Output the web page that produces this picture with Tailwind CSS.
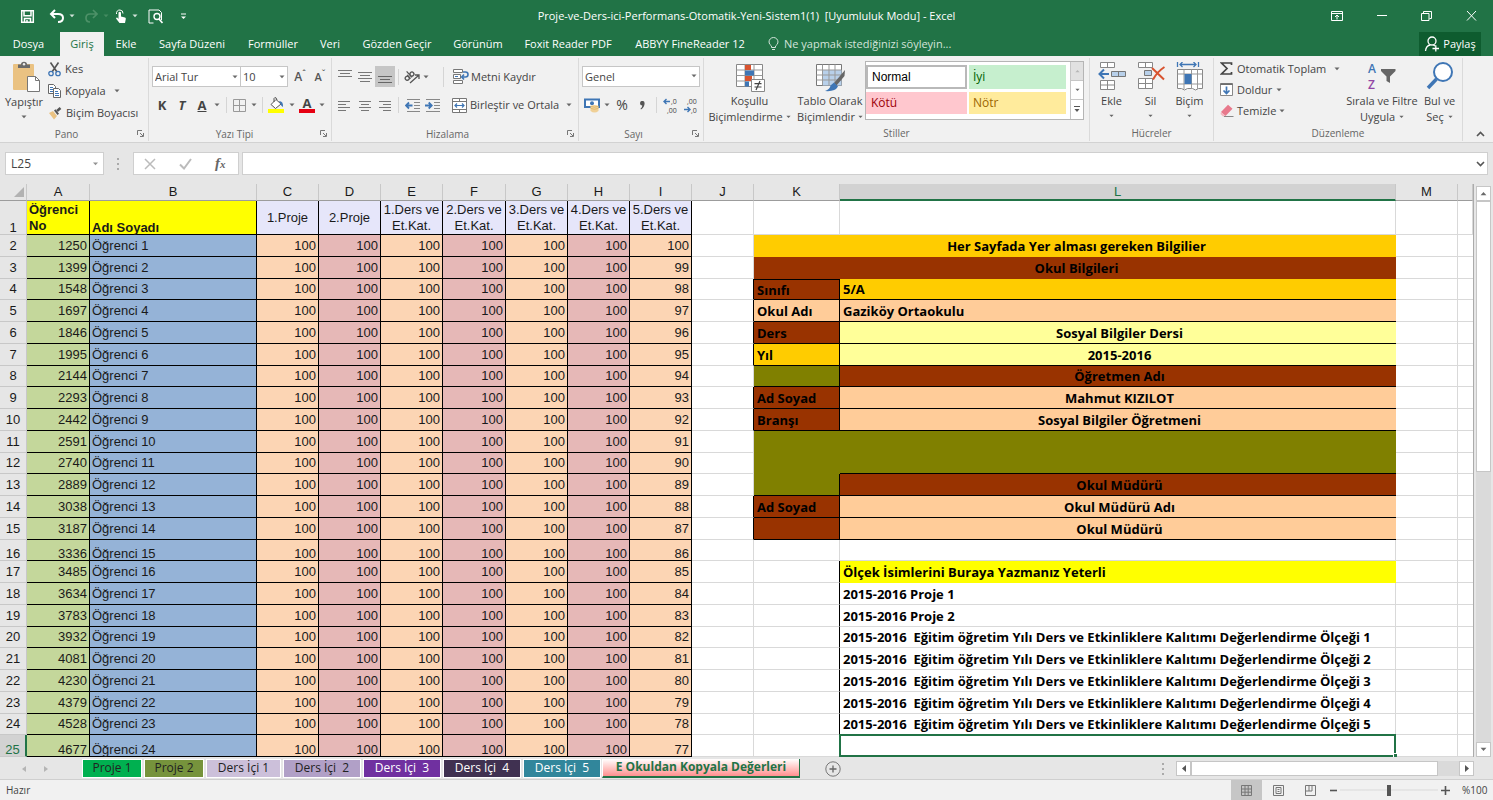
<!DOCTYPE html>
<html lang="tr">
<head>
<meta charset="utf-8">
<title>Proje-ve-Ders-ici-Performans-Otomatik-Yeni-Sistem1(1) - Excel</title>
<script src="https://cdn.jsdelivr.net/npm/@tailwindcss/browser@4"></script>
</head>
<body class="h-screen overflow-hidden flex flex-col bg-[#e6e6e6] font-['Open_Sans','Noto_Sans',sans-serif] text-[11px] leading-4 text-[#444444]">
<svg class="hidden">
  <symbol id="dd" viewBox="0 0 6 4"><path d="M0.5 0.5h5L3 3.2z" fill="currentColor" fill-opacity="0.8"/></symbol>
  <symbol id="launch" viewBox="0 0 7 7"><path d="M0.5 5V0.5H5M3 3l3 3M6.5 3v3.5H3" fill="none" stroke="#777" stroke-width="1"/></symbol>
</svg>

<!-- Title bar -->
<header class="h-8 shrink-0 bg-[#217346] text-white flex items-center justify-between relative">
  <div class="flex items-center pl-[20px]">
    <button aria-label="Kaydet" class="w-[15px] h-[15px]"><svg viewBox="0 0 15 15"><path d="M1.7 1.7h11.6v11.6H1.7zM4 1.7v5h7v-5M4.5 13v-3.500h6V13M7 11v2" fill="none" stroke="#fff" stroke-width="1.5"/></svg></button>
    <button aria-label="Geri Al" class="w-[16px] h-[14px] ml-[14px]"><svg viewBox="0 0 16 14"><path d="M6 1L2 5l4 4M2.500 5H9q5 0 5 4t-5 4" fill="none" stroke="#fff" stroke-width="2"/></svg></button>
    <svg class="w-[6px] h-[4px] ml-[4px]"><use href="#dd"/></svg>
    <button aria-label="Yinele" class="w-[14px] h-[14px] ml-[9px] text-[#4d9168]"><svg viewBox="0 0 14 14"><path d="M9 1l4 4-4 4M12.500 5H6Q2 5 2 9t4 4" fill="none" stroke="currentColor" stroke-width="1.700"/></svg></button>
    <svg class="w-[6px] h-[4px] ml-[5px] text-[#4d9168]"><use href="#dd"/></svg>
    <button aria-label="Dokunma Modu" class="w-[12px] h-[15px] ml-[6px]"><svg viewBox="0 0 12 15"><path d="M1.500 5A3.300 3.300 0 0 1 5 1a3.300 3.300 0 0 1 3 3.500" fill="none" stroke="#fff"/><path d="M3.500 3.500q1.200-1.500 2.500 0V7.500l4 1q1 .4 .8 1.500L10 14H4.500L1 9.500q.5-1.300 1.500-.8L3.500 10z" fill="#fff"/></svg></button>
    <svg class="w-[6px] h-[4px] ml-[5px]"><use href="#dd"/></svg>
    <button aria-label="Baskı Önizleme" class="w-[15px] h-[15px] ml-[10px]"><svg viewBox="0 0 15 15"><path d="M5.500 14H1V1h10l2.500 2.500V11" fill="none" stroke="#fff"/><circle cx="9" cy="7.500" r="3" fill="none" stroke="#fff" stroke-width="1.400"/><path d="M11 10l3.500 4" stroke="#fff" stroke-width="1.700"/></svg></button>
    <svg class="w-[5px] h-[7px] ml-[18px]" viewBox="0 0 5 7"><path d="M0 1h5" stroke="#fff"/><path d="M0 3.500h5L2.500 6z" fill="#fff"/></svg>
  </div>
  <h1 class="absolute inset-x-0 top-2 text-center whitespace-pre">Proje-ve-Ders-ici-Performans-Otomatik-Yeni-Sistem1(1)  [Uyumluluk Modu] - Excel</h1>
  <div class="flex items-center pr-[16px] gap-[34px] relative">
    <button aria-label="Şerit Görüntüleme" class="w-3 h-3"><svg viewBox="0 0 12 12"><path d="M.5 1.500h11v9H.5zM.5 3.500h11M6 9.500V5M4 7l2-2 2 2" fill="none" stroke="#fff"/></svg></button>
    <button aria-label="Simge Durumuna Küçült" class="w-[10px] h-3"><svg viewBox="0 0 10 12"><path d="M0 5.500h10" stroke="#fff"/></svg></button>
    <button aria-label="Önceki Boyut" class="w-[11px] h-3"><svg viewBox="0 0 11 12"><path d="M.5 3.500h7.500v7H.5zM2.500 3V1.500h8v7H8.500" fill="none" stroke="#fff"/></svg></button>
    <button aria-label="Kapat" class="w-[11px] h-3"><svg viewBox="0 0 11 12"><path d="M1 1l9 9.500M10 1l-9 9.500" stroke="#fff"/></svg></button>
  </div>
</header>

<!-- Ribbon tabs -->
<nav class="h-6 shrink-0 bg-[#217346] text-white flex items-stretch">
  <button class="w-[57px]">Dosya</button>
  <button class="w-[44px] ml-[3px] bg-[#f1f1f1] text-[#217346]">Giriş</button>
  <button class="w-[44px]">Ekle</button>
  <button class="w-[88px]">Sayfa Düzeni</button>
  <button class="w-[74px]">Formüller</button>
  <button class="w-[40px]">Veri</button>
  <button class="w-[94px]">Gözden Geçir</button>
  <button class="w-[68px]">Görünüm</button>
  <button class="w-[112px]">Foxit Reader PDF</button>
  <button class="w-[132px]">ABBYY FineReader 12</button>
  <button class="ml-[12px] flex items-center gap-[5px] text-[#d3e3da]"><svg class="w-[11px] h-[14px]" viewBox="0 0 11 14"><path d="M3.500 10.500V9Q1 7.300 1 5a4.500 4.500 0 0 1 9 0q0 2.300-2.500 4v1.500zM4 12.500h3" fill="none" stroke="#d3e3da"/></svg>Ne yapmak istediğinizi söyleyin...</button>
  <button class="ml-auto mr-[12px] w-[62px] bg-[#0e5c2f] flex items-center justify-center gap-[3px]"><svg class="w-4 h-4" viewBox="0 0 16 16"><circle cx="8" cy="5" r="4" fill="none" stroke="#fff" stroke-width="1.300"/><path d="M1.500 15q.5-5.500 5-6M9 8.700l2 1.300M8.500 12.500H15M11.800 9.300v6.200" fill="none" stroke="#fff" stroke-width="1.300"/></svg>Paylaş</button>
</nav>

<!-- Ribbon -->
<section class="h-[87px] shrink-0 bg-[#f1f1f1] border-b border-[#d2d2d2] flex pb-[1px] pt-[2px]">
  <!-- Pano -->
  <div class="w-[149px] border-r border-[#dadada] flex flex-col">
    <div class="flex h-[68px]">
      <button class="w-[48px] flex flex-col items-center justify-start pt-[3px]">
        <svg class="w-[28px] h-[31px] ml-1 shrink-0" viewBox="0 0 28 31"><rect x="1" y="3" width="21" height="26" rx="1" fill="#eac282"/><path d="M6 7V3.500h3Q9 .8 12 .8t3 2.700h3V7z" fill="#6b6b6b"/><circle cx="12" cy="3.200" r="1.200" fill="#eee"/><path d="M15.500 15.500h8l4 4V30.500h-12z" fill="#fff" stroke="#777"/><path d="M23.500 15.500v4h4" fill="none" stroke="#777"/></svg>
        <span class="mt-0.5">Yapıştır</span>
        <svg class="w-[6px] h-[4px] mt-[5px]"><use href="#dd"/></svg>
      </button>
      <div class="flex flex-col items-start">
        <button class="h-[22px] flex items-center gap-[4px]"><svg class="w-[13px] h-[15px]" viewBox="0 0 13 15"><path d="M2.500 0.500L9 10M10.500 0.500L4 10" stroke="#555" stroke-width="1.600"/><circle cx="3" cy="11.500" r="2.200" fill="none" stroke="#3f76b5" stroke-width="1.300"/><circle cx="10" cy="11.500" r="2.200" fill="none" stroke="#3f76b5" stroke-width="1.300"/></svg>Kes</button>
        <button class="h-[22px] flex items-center gap-[4px]"><svg class="w-[13px] h-[14px]" viewBox="0 0 13 14"><path d="M.5 .5h5l2 2v7h-7z" fill="#fff" stroke="#666"/><path d="M2 3.500h3M2 5.500h3M2 7.500h3" stroke="#3f76b5"/><path d="M5.500 4.500h5l2 2v7h-7z" fill="#fff" stroke="#666"/><path d="M7 7.500h3M7 9.500h4M7 11.500h4" stroke="#3f76b5"/></svg>Kopyala<svg class="w-[6px] h-[4px] ml-[4px]"><use href="#dd"/></svg></button>
        <button class="h-[22px] flex items-center gap-[4px] whitespace-nowrap"><svg class="w-[14px] h-[13px]" viewBox="0 0 14 13"><path d="M1 6l4-2 4 5-3 3.500z" fill="#eac282"/><path d="M6 3.500l1.500-1.200 3.500 4.500L9.500 8z" fill="#555"/><path d="M9 4l3.500-3" stroke="#555" stroke-width="2.500"/></svg>Biçim Boyacısı</button>
      </div>
    </div>
    <div class="h-[15px] flex items-center text-[10px] text-[#666]"><span class="grow text-center pr-[4px]">Pano</span><svg class="w-[7px] h-[7px] mr-[4px]"><use href="#launch"/></svg></div>
  </div>
  <!-- Yazı Tipi -->
  <div class="w-[183px] border-r border-[#dadada] flex flex-col">
    <div class="h-[68px] pt-2 pl-[3px]">
      <div class="flex items-center h-[21px]">
        <label class="relative w-[89px]"><select aria-label="Yazı tipi" class="appearance-none w-full h-[21px] bg-white border border-[#c6c6c6] pl-[2px] outline-none"><option>Arial Tur</option></select><svg class="absolute right-[3px] top-[9px] w-[6px] h-[4px]"><use href="#dd"/></svg></label>
        <label class="relative w-[47px]"><select aria-label="Boyut" class="appearance-none w-full h-[21px] bg-white border border-l-0 border-[#c6c6c6] pl-[2px] outline-none"><option>10</option></select><svg class="absolute right-[3px] top-[9px] w-[6px] h-[4px]"><use href="#dd"/></svg></label>
        <button class="w-[20px] ml-[2px] text-[12px] font-semibold text-[#555]">A<sup class="text-[8px]">ˆ</sup></button>
        <button class="w-[20px] text-[11px] font-semibold text-[#555]">A<sup class="text-[8px]">ˇ</sup></button>
      </div>
      <div class="flex items-center h-[22px] mt-[7px] text-[13px] font-bold">
        <button class="w-[20px]">K</button>
        <button class="w-[20px] italic">T</button>
        <button class="w-[20px] underline">A</button>
        <svg class="w-[6px] h-[4px] ml-[2px]"><use href="#dd"/></svg>
        <i class="w-px h-4 bg-[#d5d5d5] ml-[6px]"></i>
        <svg class="w-[13px] h-[13px] ml-[6px]" viewBox="0 0 13 13"><path d="M.5 .5h12v12H.5zM6.500 .5v12M.5 6.500h12" fill="none" stroke="#999"/></svg>
        <svg class="w-[6px] h-[4px] ml-[5px]"><use href="#dd"/></svg>
        <i class="w-px h-4 bg-[#d5d5d5] ml-[5px]"></i>
        <svg class="w-[17px] h-[16px] ml-[5px]" viewBox="0 0 17 16"><rect x="0" y="12" width="16" height="4" fill="#ffff00"/><path d="M3 7.500L8 2.500l5 4.500-5.500 4.500z" fill="#fff" stroke="#555"/><path d="M6 5V1.500Q6.500 .2 8 .8L9 3" fill="none" stroke="#555"/><path d="M11 4q4.500 0 4 6-2-1-2.500-3z" fill="#3f76b5"/></svg>
        <svg class="w-[6px] h-[4px] ml-[4px]"><use href="#dd"/></svg>
        <button aria-label="Yazı tipi rengi" class="ml-[4px] w-[16px] h-[16px] leading-3 border-b-4 border-[#e60012]">A</button>
        <svg class="w-[6px] h-[4px] ml-[4px]"><use href="#dd"/></svg>
      </div>
    </div>
    <div class="h-[15px] flex items-center text-[10px] text-[#666]"><span class="grow text-center">Yazı Tipi</span><svg class="w-[7px] h-[7px] mr-[4px]"><use href="#launch"/></svg></div>
  </div>
  <!-- Hizalama -->
  <div class="w-[247px] border-r border-[#dadada] flex flex-col">
    <div class="h-[68px] pt-2 pl-[3px]">
      <div class="flex items-center h-[21px]">
        <button aria-label="Üste Hizala" class="w-[20px] h-[21px] pl-[3px]"><svg class="w-[14px] h-[19px]" viewBox="0 0 14 19"><path d="M0 3.500h14M2 6.500h10M0 9.500h14" stroke="#777"/></svg></button>
        <button aria-label="Ortaya Hizala" class="w-[20px] h-[21px] pl-[3px]"><svg class="w-[14px] h-[19px]" viewBox="0 0 14 19"><path d="M0 5.500h14M2 8.500h10M0 11.500h14M2 14.500h10" stroke="#777"/></svg></button>
        <button aria-label="Alta Hizala" class="w-[20px] h-[21px] pl-[3px] bg-[#c6c6c6]"><svg class="w-[14px] h-[19px]" viewBox="0 0 14 19"><path d="M0 9.500h14M2 12.500h10M0 15.500h14" stroke="#666"/></svg></button>
        <i class="w-px h-4 bg-[#d5d5d5] ml-[3px]"></i>
        <button aria-label="Yönlendirme" class="ml-[5px] w-[16px] h-[15px]"><svg viewBox="0 0 16 15" fill="none" stroke="#555" stroke-width="1.300"><g transform="rotate(-42 5 7)"><circle cx="2.200" cy="7.500" r="2"/><path d="M4.400 5v5M6.300 2v8"/><circle cx="8.500" cy="7.500" r="2"/></g><path d="M6 14L14.500 6.500M15 10V6h-4"/></svg></button>
        <svg class="w-[6px] h-[4px] ml-[3px]"><use href="#dd"/></svg>
        <i class="w-px h-5 bg-[#d5d5d5] ml-[14px]"></i>
        <button class="flex items-center gap-[2px] ml-[9px]"><svg class="w-[16px] h-[15px]" viewBox="0 0 16 15"><path d="M.5 .5h9v3h-9zM.5 5.500h7v4h-7zM.5 11.500h9v3h-9z" fill="#fff" stroke="#777"/><path d="M2 7.500h3" stroke="#3f76b5"/><path d="M10 3h2.500q2.500 0 2.500 2.500T12.500 8H9M11 5.500L8.700 8 11 10.500" fill="none" stroke="#3f76b5" stroke-width="1.600"/></svg>Metni Kaydır</button>
      </div>
      <div class="flex items-center h-[22px] mt-[7px]">
        <button aria-label="Sola Hizala" class="w-[20px] pl-[3px]"><svg class="w-[12px] h-[11px]" viewBox="0 0 12 11"><path d="M0 1.500h12M0 4.500h8M0 7.500h12M0 10.500h8" stroke="#777"/></svg></button>
        <button aria-label="Ortala" class="w-[20px] pl-[4px]"><svg class="w-[12px] h-[11px]" viewBox="0 0 12 11"><path d="M0 1.500h12M2 4.500h8M0 7.500h12M2 10.500h8" stroke="#777"/></svg></button>
        <button aria-label="Sağa Hizala" class="w-[20px] pl-[4px]"><svg class="w-[12px] h-[11px]" viewBox="0 0 12 11"><path d="M0 1.500h12M4 4.500h8M0 7.500h12M4 10.500h8" stroke="#777"/></svg></button>
        <i class="w-px h-4 bg-[#d5d5d5] ml-[3px]"></i>
        <button aria-label="Girintiyi Azalt" class="ml-[6px]"><svg class="w-[15px] h-[13px]" viewBox="0 0 15 13"><path d="M2 .5h13M9 3.500h6M9 6.500h6M9 9.500h6M2 12.500h13" stroke="#888"/><path d="M7.500 6.500H1M4 3.500L1 6.500l3 3" fill="none" stroke="#3f76b5" stroke-width="1.800"/></svg></button>
        <button aria-label="Girintiyi Artır" class="ml-[5px]"><svg class="w-[15px] h-[13px]" viewBox="0 0 15 13"><path d="M1 .5h14M9 3.500h6M9 6.500h6M9 9.500h6M1 12.500h14" stroke="#888"/><path d="M0 6.500h6.500M3.700 3.500l3 3-3 3" fill="none" stroke="#3f76b5" stroke-width="1.800"/></svg></button>
        <button class="flex items-center gap-[2px] ml-[12px]"><svg class="w-[16px] h-[15px]" viewBox="0 0 16 15"><path d="M.5 .5h14v14H.5zM.5 3.500h14M.5 11.500h14M7.500 .5v3M7.500 11.500v3" fill="#fff" stroke="#777"/><path d="M3 7.500h9M5 5.500l-2 2 2 2M10 5.500l2 2-2 2" fill="none" stroke="#3f76b5" stroke-width="1.200"/></svg>Birleştir ve Ortala</button>
        <svg class="w-[6px] h-[4px] ml-auto mr-[6px]"><use href="#dd"/></svg>
      </div>
    </div>
    <div class="h-[15px] flex items-center text-[10px] text-[#666]"><span class="grow text-center pr-[4px]">Hizalama</span><svg class="w-[7px] h-[7px] mr-[4px]"><use href="#launch"/></svg></div>
  </div>
  <!-- Sayı -->
  <div class="w-[125px] border-r border-[#dadada] flex flex-col">
    <div class="h-[68px] pt-2 pl-[3px]">
      <label class="relative block w-[118px] h-[21px]"><select aria-label="Sayı biçimi" class="appearance-none w-full h-[21px] bg-white border border-[#c6c6c6] pl-[2px] outline-none"><option>Genel</option></select><svg class="absolute right-[3px] top-[8px] w-[6px] h-[4px]"><use href="#dd"/></svg></label>
      <div class="flex items-center h-[22px] mt-[7px]">
        <button aria-label="Para Birimi" class="ml-[2px]"><svg class="w-[16px] h-[15px]" viewBox="0 0 16 15"><rect x="1" y="1.500" width="14" height="7.500" fill="#fff" stroke="#3f76b5" stroke-width="2"/><circle cx="8" cy="5.200" r="2" fill="#3f76b5"/><path d="M6.500 8v5q4 3 8 0V8q-4-2-8 0z" fill="#f0d096"/><path d="M6.500 10.300q4 2 8 0M6.500 8.200q4 2 8 0" fill="none" stroke="#d9b060" stroke-width=".7"/></svg></button>
        <svg class="w-[6px] h-[4px] ml-[4px]"><use href="#dd"/></svg>
        <button class="w-[24px] text-[14px]">%</button>
        <button aria-label="Virgül Stili" class="w-[16px] flex justify-center"><svg class="w-[5px] h-[9px]" viewBox="0 0 5 9"><path d="M0 2.200a2.200 2.200 0 0 1 4.600 0Q4.600 6 1 8.500L.5 7.800Q2.300 6 2.300 4.400Q0 4.400 0 2.200z" fill="#555"/></svg></button>
        <i class="w-px h-4 bg-[#d5d5d5] ml-[6px]"></i>
        <button aria-label="Ondalık Artır" class="ml-[7px]"><svg class="w-[13px] h-[15px] overflow-visible" viewBox="0 0 13 15"><text x="7" y="6" font-size="7" fill="#444">,0</text><text x="3" y="15" font-size="7" fill="#444">,00</text><path d="M0 3.500h6M2.500 1L0 3.500 2.500 6" fill="none" stroke="#3f76b5" stroke-width="1.400"/></svg></button>
        <button aria-label="Ondalık Azalt" class="ml-[7px]"><svg class="w-[13px] h-[15px] overflow-visible" viewBox="0 0 13 15"><text x="3" y="6" font-size="7" fill="#444">,00</text><text x="7" y="15" font-size="7" fill="#444">,0</text><path d="M0 11.500h6M3.500 9l2.500 2.500L3.500 14" fill="none" stroke="#3f76b5" stroke-width="1.400"/></svg></button>
      </div>
    </div>
    <div class="h-[15px] flex items-center text-[10px] text-[#666]"><span class="grow text-center pr-[4px]">Sayı</span><svg class="w-[7px] h-[7px] mr-[4px]"><use href="#launch"/></svg></div>
  </div>
  <!-- Stiller -->
  <div class="w-[386px] border-r border-[#dadada] flex flex-col">
    <div class="h-[68px] flex">
      <button class="w-[91px] flex flex-col items-center justify-start pt-[6px]">
        <svg class="w-[30px] h-[28px] shrink-0" viewBox="0 0 30 28"><path d="M1.500 .5h26v22h-26z" fill="#fff" stroke="#888"/><path d="M1.500 6h26M1.500 11.500h26M1.500 17h26M10 .5v22M19 .5v22" stroke="#999"/><path d="M10 1h6v5h-6zM10 12h7v5h-7z" fill="#d8532f"/><path d="M10 6.500h9v5h-9zM10 17.500h4v5h-4z" fill="#3f76b5"/><path d="M16.500 15.500h13v12h-13z" fill="#fff" stroke="#888"/><path d="M19.500 19.700h7M19.500 23h7M25 17l-4 9" stroke="#444" stroke-width="1.200"/></svg>
        <span class="mt-[1px]">Koşullu</span>
        <span class="flex items-center gap-[3px]">Biçimlendirme<svg class="w-[5px] h-[4px]"><use href="#dd"/></svg></span>
      </button>
      <button class="w-[70px] flex flex-col items-center justify-start pt-[6px] whitespace-nowrap">
        <svg class="w-[30px] h-[28px] shrink-0" viewBox="0 0 30 28"><path d="M1.500 .5h25v21h-25z" fill="#fff" stroke="#777"/><path d="M8 6h18.500v15.500H8z" fill="#b8d0ea"/><path d="M1.500 6h25M1.500 11h25M1.500 16h25M7.500 .5v21M14 .5v21M20 .5v21" stroke="#999"/><path d="M30 6L19 19l2.500 2.500L29.500 12z" fill="#666"/><path d="M19 18.500l4 4Q20 28 10 27q5-2 5.500-5.500z" fill="#3f76b5"/></svg>
        <span class="mt-[1px]">Tablo Olarak</span>
        <span class="flex items-center gap-[3px]">Biçimlendir<svg class="w-[5px] h-[4px]"><use href="#dd"/></svg></span>
      </button>
      <div class="w-[219px] h-[59px] mt-[3px] border border-[#b5b5b5] bg-white flex">
        <div class="grid grid-cols-[101px_97px] grid-rows-[24px_22px] gap-x-[2px] gap-y-[3px] pt-[3px] text-[12px]">
          <button class="border-2 border-[#b9b9b9] text-left pl-[4px] text-black font-['Liberation_Sans',sans-serif]">Normal</button>
          <button class="bg-[#c6efce] text-[#006100] text-left pl-[4px]">İyi</button>
          <button class="bg-[#ffc7ce] text-[#9c0006] text-left pl-[5px]">Kötü</button>
          <button class="bg-[#ffeb9c] text-[#9c6500] text-left pl-[4px]">Nötr</button>
        </div>
        <div class="ml-auto w-[13px] border-l border-[#c6c6c6] flex flex-col divide-y divide-[#c6c6c6]">
          <button aria-label="Yukarı" class="h-[19px] bg-[#e1e1e1] flex items-center justify-center text-[#aaa]"><svg class="w-[5px] h-[4px] rotate-180"><use href="#dd"/></svg></button>
          <button aria-label="Aşağı" class="h-[19px] flex items-center justify-center"><svg class="w-[5px] h-[4px]"><use href="#dd"/></svg></button>
          <button aria-label="Diğer" class="h-[19px] flex items-center justify-center"><svg class="w-[6px] h-[7px]" viewBox="0 0 6 7"><path d="M0 .5h6" stroke="#555"/><path d="M.5 3h5L3 6z" fill="#555"/></svg></button>
        </div>
      </div>
    </div>
    <div class="h-[15px] leading-[15px] text-center text-[10px] text-[#666]">Stiller</div>
  </div>
  <!-- Hücreler -->
  <div class="w-[124px] border-r border-[#dadada] flex flex-col">
    <div class="h-[68px] flex pl-[2px]">
      <button class="w-[39px] flex flex-col items-center justify-start pt-[4px]">
        <svg class="w-[28px] h-[30px] shrink-0" viewBox="0 0 28 30"><path d="M2.500 .5h14v5h-14zM9.500 .5v5M2.500 18.500h14v9h-14zM9.500 18.500v9M2.500 23h14" fill="#fff" stroke="#888"/><path d="M13.500 9.500h14v5h-14zM20.500 9.500v5" fill="#b8d0ea" stroke="#777"/><path d="M11 12H1.500M6 7.500L1.500 12 6 16.500" fill="none" stroke="#3f76b5" stroke-width="2"/></svg>
        <span class="mt-[1px]">Ekle</span><svg class="w-[5px] h-[4px] mt-[5px]"><use href="#dd"/></svg>
      </button>
      <button class="w-[39px] flex flex-col items-center justify-start pt-[4px]">
        <svg class="w-[28px] h-[30px] shrink-0" viewBox="0 0 28 30"><path d="M1.500 .5h14v5h-14zM8.500 .5v5M1.500 16.500h14v10h-14zM8.500 16.500v10M1.500 21.500h14" fill="#fff" stroke="#888"/><path d="M7.500 8.500h7v5h-7z" fill="#b8d0ea" stroke="#777"/><path d="M15 6l12 11.500M27.500 5Q20 10 16 17.500" fill="none" stroke="#d8532f" stroke-width="2"/></svg>
        <span class="mt-[1px]">Sil</span><svg class="w-[5px] h-[4px] mt-[5px]"><use href="#dd"/></svg>
      </button>
      <button class="w-[39px] flex flex-col items-center justify-start pt-[4px]">
        <svg class="w-[28px] h-[30px] shrink-0" viewBox="0 0 28 30"><path d="M1.500 0v5M22.500 0v5M4 2.500h16M6.500 0L4 2.500 6.500 5M17.500 0L20 2.500 17.500 5" fill="none" stroke="#3f76b5" stroke-width="1.300"/><path d="M1.500 7.500h25v19h-4q-3 3-6 0h-5q-3 3-6 0h-4z" fill="#fff" stroke="#888"/><path d="M1.500 12h25M1.500 22h25M8 7.500V27M15.500 7.500V27M21.500 7.500V27" stroke="#999"/><path d="M8.500 12h7v10h-7z" fill="#3f76b5"/></svg>
        <span class="mt-[1px]">Biçim</span><svg class="w-[5px] h-[4px] mt-[5px]"><use href="#dd"/></svg>
      </button>
    </div>
    <div class="h-[15px] leading-[15px] text-center text-[10px] text-[#666]">Hücreler</div>
  </div>
  <!-- Düzenleme -->
  <div class="w-[249px] border-r border-[#dadada] flex flex-col">
    <div class="h-[68px] flex">
      <div class="w-[130px] pl-[6px] flex flex-col">
        <button class="h-[21px] flex items-center gap-[4px]"><svg class="w-[13px] h-[13px]" viewBox="0 0 13 13"><path d="M11.500 3V1H1.500L7 6.500 1.500 12h10V10" fill="none" stroke="#444" stroke-width="1.700"/></svg>Otomatik Toplam<svg class="w-[6px] h-[4px] ml-[4px]"><use href="#dd"/></svg></button>
        <button class="h-[21px] flex items-center gap-[4px]"><svg class="w-[13px] h-[13px]" viewBox="0 0 13 13"><path d="M.5 .5h12v12H.5z" fill="#fff" stroke="#888"/><path d="M.5 1.200h12" stroke="#666" stroke-width="1.500"/><path d="M6.500 3.500v7M3.500 7.500l3 3 3-3" fill="none" stroke="#3f76b5" stroke-width="1.700"/></svg>Doldur<svg class="w-[6px] h-[4px]"><use href="#dd"/></svg></button>
        <button class="h-[21px] flex items-center gap-[3px]"><svg class="w-[14px] h-[13px]" viewBox="0 0 14 13"><path d="M1 8L8 .8l4.500 4L5.500 12z" fill="#e8798c"/><path d="M1 8l4.500 4-2.500 .5L.5 10z" fill="#f3b5bf"/><path d="M4 12.500h9.500" stroke="#888"/></svg>Temizle<svg class="w-[6px] h-[4px]"><use href="#dd"/></svg></button>
      </div>
      <button class="w-[76px] flex flex-col items-center justify-start pt-[4px] whitespace-nowrap">
        <svg class="w-[28px] h-[30px] shrink-0 overflow-visible" viewBox="0 0 28 30"><text x="0" y="11" font-size="12" font-weight="600" fill="#3f76b5">A</text><text x="0" y="27" font-size="12" font-weight="600" fill="#9146a5">Z</text><path d="M13 7h14.500v2L22 14.500V21l-3.500-2v-4.500L13 9z" fill="#666"/></svg>
        <span class="mt-[1px]">Sırala ve Filtre</span>
        <span class="flex items-center gap-[4px]">Uygula<svg class="w-[5px] h-[4px]"><use href="#dd"/></svg></span>
      </button>
      <button class="w-[39px] flex flex-col items-center justify-start pt-[4px] whitespace-nowrap">
        <svg class="w-[28px] h-[30px] shrink-0" viewBox="0 0 28 30"><circle cx="17" cy="10" r="9" fill="#fff" stroke="#3f76b5" stroke-width="2"/><path d="M10.500 17L2 26" stroke="#3f76b5" stroke-width="3.500"/></svg>
        <span class="mt-[1px]">Bul ve</span>
        <span class="flex items-center gap-[4px]">Seç<svg class="w-[5px] h-[4px]"><use href="#dd"/></svg></span>
      </button>
    </div>
    <div class="h-[15px] leading-[15px] text-center text-[10px] text-[#666]">Düzenleme</div>
  </div>
  <button aria-label="Şeridi Daralt" class="ml-auto mr-[8px] self-end pb-[4px]"><svg class="w-[9px] h-[6px]" viewBox="0 0 9 6"><path d="M1 5l3.500-3.500L8 5" fill="none" stroke="#555" stroke-width="1.600"/></svg></button>
</section>

<!-- Formula bar -->
<section class="h-[41px] shrink-0 flex items-center pl-[5px] pr-[5px]">
  <label class="relative w-[99px]"><input aria-label="Ad Kutusu" value="L25" class="block w-full h-[23px] bg-white border border-[#cfcfcf] pl-[5px] text-[12px] outline-none"><svg class="absolute right-[5px] top-[10px] w-[7px] h-[4px] text-[#777]"><use href="#dd"/></svg></label>
  <svg class="w-[2px] h-[12px] ml-[13px]" viewBox="0 0 2 12"><path d="M1 0v2M1 5v2M1 10v2" stroke="#aaa" stroke-width="2"/></svg>
  <div class="ml-[14px] w-[106px] h-[23px] bg-white border border-[#cfcfcf] flex items-center">
    <button aria-label="İptal" class="ml-[10px]"><svg class="w-[12px] h-[12px]" viewBox="0 0 12 12"><path d="M1 1l10 10M11 1L1 11" stroke="#bbb" stroke-width="1.500"/></svg></button>
    <button aria-label="Giriş" class="ml-[23px]"><svg class="w-[13px] h-[12px]" viewBox="0 0 13 12"><path d="M1 6.500L5 10.500 12 1" fill="none" stroke="#bbb" stroke-width="2"/></svg></button>
    <button class="ml-[23px] font-['Liberation_Serif',serif] italic font-bold text-[15px] text-[#666]">f<span class="text-[11px]">x</span></button>
  </div>
  <label class="relative grow ml-[3px]"><input aria-label="Formül Çubuğu" class="block w-full h-[23px] bg-white border border-[#cfcfcf] px-2 outline-none"><svg class="absolute right-[3px] top-[9px] w-[9px] h-[6px]" viewBox="0 0 9 6"><path d="M1 1l3.500 3.500L8 1" fill="none" stroke="#555" stroke-width="1.600"/></svg></label>
</section>

<!-- Sheet -->
<main class="grow min-h-0 flex">
  <div class="grow min-w-0 overflow-hidden border-r border-[#ababab]">
    <table class="w-full table-fixed border-separate border-spacing-0 font-['Liberation_Sans',Arial,sans-serif] text-[13px] leading-4 text-[#1a1a1a] bg-white">
      <colgroup>
        <col class="w-[27px]"><col class="w-[63px]"><col class="w-[167px]"><col class="w-[62px]"><col class="w-[62px]"><col class="w-[62px]"><col class="w-[63px]"><col class="w-[62px]"><col class="w-[62px]"><col class="w-[62px]"><col class="w-[62px]"><col class="w-[86px]"><col><col class="w-[62px]"><col class="w-[15px]">
      </colgroup>
      <thead id="head"></thead>
      <tbody id="body"></tbody>
    </table>
  </div>
  <div class="w-[19px] shrink-0 bg-[#e6e6e6] flex flex-col items-center pt-[2px]">
    <button aria-label="Yukarı kaydır" class="w-[15px] h-[15px] bg-white border border-[#c6c6c6] flex items-center justify-center"><svg class="w-[7px] h-[5px] rotate-180"><use href="#dd"/></svg></button>
    <div class="w-[15px] h-[271px] bg-white border border-[#c6c6c6]"></div>
    <div class="w-[15px] grow bg-[#dadada]"></div>
    <button aria-label="Aşağı kaydır" class="w-[15px] h-[15px] bg-white border border-[#c6c6c6] flex items-center justify-center"><svg class="w-[7px] h-[5px]"><use href="#dd"/></svg></button>
  </div>
</main>

<!-- Sheet tabs -->
<nav class="h-[23px] shrink-0 flex items-start pt-[2px] text-[12px] text-[#222] whitespace-pre border-b border-[#cfcfcf]">
  <div class="w-[82px] flex items-center h-[19px] text-[#b5b5b5]">
    <svg class="w-[4px] h-[6px] ml-[22px]" viewBox="0 0 4 6"><path d="M4 0v6L0 3z" fill="currentColor"/></svg>
    <svg class="w-[4px] h-[6px] ml-[18px]" viewBox="0 0 4 6"><path d="M0 0v6l4-3z" fill="currentColor"/></svg>
  </div>
  <button class="w-[60px] h-[19px] mr-[2px] leading-4 pb-[4px] bg-[#00b050] border border-white">Proje 1</button>
  <button class="w-[60px] h-[19px] mr-[2px] leading-4 pb-[4px] bg-[#76933c] border border-white">Proje 2</button>
  <button class="w-[75px] h-[19px] mr-[2px] leading-4 pb-[4px] bg-[#ccc0da] border border-white">Ders İçi 1</button>
  <button class="w-[78px] h-[19px] mr-[2px] leading-4 pb-[4px] bg-[#b1a0c7] border border-white">Ders İçi  2</button>
  <button class="w-[78px] h-[19px] mr-[2px] leading-4 pb-[4px] bg-[#7030a0] border border-white text-white">Ders İçi  3</button>
  <button class="w-[78px] h-[19px] mr-[2px] leading-4 pb-[4px] bg-[#403151] border border-white text-white">Ders İçi  4</button>
  <button class="w-[78px] h-[19px] mr-[1px] leading-4 pb-[4px] bg-[#31869b] border border-white text-white">Ders İçi  5</button>
  <button class="w-[198px] h-[19px] leading-4 pb-[1px] bg-linear-to-b from-white to-[#ff8f8f] border-x border-b-2 border-b-[#217346] border-l-white border-r-[#217346] text-[#217346] font-bold">E Okuldan Kopyala Değerleri</button>
  <button aria-label="Yeni sayfa" class="ml-[25px] mt-[2px]"><svg class="w-[16px] h-[16px]" viewBox="0 0 16 16"><circle cx="8" cy="8" r="7.200" fill="none" stroke="#777"/><path d="M4.500 8h7M8 4.500v7" stroke="#666" stroke-width="1.300"/></svg></button>
  <div class="ml-auto mr-[19px] mt-[2px] h-[15px] flex items-center">
    <svg class="w-[2px] h-[12px] mr-[12px]" viewBox="0 0 2 12"><path d="M1 0v2M1 5v2M1 10v2" stroke="#aaa" stroke-width="2"/></svg>
    <button aria-label="Sola kaydır" class="w-[15px] h-[15px] bg-white border border-[#c6c6c6] flex items-center justify-center"><svg class="w-[4px] h-[7px]" viewBox="0 0 4 7"><path d="M4 0v7L0 3.500z" fill="#555"/></svg></button>
    <div class="w-[247px] h-[15px] bg-white border border-[#c6c6c6]"></div>
    <div class="w-[21px] h-[15px] bg-[#dadada]"></div>
    <button aria-label="Sağa kaydır" class="w-[15px] h-[15px] bg-white border border-[#c6c6c6] flex items-center justify-center"><svg class="w-[4px] h-[7px]" viewBox="0 0 4 7"><path d="M0 0v7l4-3.500z" fill="#555"/></svg></button>
  </div>
</nav>

<!-- Status bar -->
<footer class="h-5 shrink-0 bg-[#f1f1f1] flex items-center pl-[6px] pr-[6px] text-[10px]">
  <span>Hazır</span>
  <button aria-label="Normal" class="ml-auto w-[31px] h-5 bg-[#c6c6c6] flex items-center justify-center"><svg class="w-[11px] h-[11px]" viewBox="0 0 11 11"><path d="M.5 .5h10v10H.5zM.5 4h10M.5 7.200h10M4 .5v10M7.200 .5v10" fill="none" stroke="#777"/></svg></button>
  <button aria-label="Sayfa Düzeni" class="w-[32px] h-5 flex items-center justify-center"><svg class="w-[11px] h-[11px]" viewBox="0 0 11 11"><path d="M.5 .5h10v10H.5zM3 2.500h5v6H3zM4.500 4.500h2M4.500 6.500h2" fill="none" stroke="#777"/></svg></button>
  <button aria-label="Sayfa Sonu Önizleme" class="w-[32px] h-5 flex items-center justify-center"><svg class="w-[11px] h-[11px]" viewBox="0 0 11 11"><path d="M.5 .5h10v10H.5zM4 .5v5.500M7 .5V6M.5 6H7" fill="none" stroke="#777"/></svg></button>
  <button aria-label="Uzaklaştır" class="ml-[4px]"><svg class="w-[7px] h-[9px]" viewBox="0 0 7 9"><path d="M0 4.500h7" stroke="#555" stroke-width="1.600"/></svg></button>
  <input type="range" aria-label="Yakınlaştırma" min="0" max="100" value="50" class="appearance-none w-[98px] h-[12px] mx-[3px] bg-linear-to-b from-transparent from-45% via-[#aaaaaa] via-50% to-transparent to-55% [&::-webkit-slider-thumb]:appearance-none [&::-webkit-slider-thumb]:w-[4px] [&::-webkit-slider-thumb]:h-[11px] [&::-webkit-slider-thumb]:bg-[#555]">
  <button aria-label="Yakınlaştır"><svg class="w-[9px] h-[9px]" viewBox="0 0 9 9"><path d="M0 4.500h9M4.500 0v9" stroke="#555" stroke-width="1.600"/></svg></button>
  <span class="ml-[12px] w-[25px] text-right">%100</span>
</footer>

<script>
const heads = ['', 'A', 'B', 'C', 'D', 'E', 'F', 'G', 'H', 'I', 'J', 'K', 'L', 'M', ''];
document.getElementById('head').innerHTML = '<tr class="h-[17px]">' + heads.map((h, i) => {
  if (i === 0) return '<th class="p-0 h-[17px] bg-[#e6e6e6] border-b border-r border-b-[#9c9c9c] border-r-[#c8c8c8]"><svg class="w-[10px] h-[10px] ml-auto mr-[2px]" viewBox="0 0 10 10"><path d="M10 0v10H0z" fill="#b2b2b2"/></svg></th>';
  if (h === 'L') return '<th class="p-0 h-[17px] leading-[15px] font-normal bg-[#d2d2d2] text-[#217346] border-b-2 border-r border-b-[#217346] border-r-[#c8c8c8]">L</th>';
  return '<th class="p-0 h-[17px] leading-4 font-normal bg-[#e6e6e6] border-b border-r border-b-[#9c9c9c] border-r-[#c8c8c8]">' + h + '</th>';
}).join('') + '</tr>';

const info = "font-['Comic_Sans_MS','Open_Sans',sans-serif] font-bold text-[13px] leading-4 text-black p-0 pl-[3px] whitespace-pre ";
const kl = ' border-r border-b ';
const plain = '<td class="border-r border-b border-[#d9d9d9]"></td>';
const scale = t => '<td class="border-r border-b border-b-[#d9d9d9] border-r-black"></td>' + `<td class="${info}border-r border-b border-[#d9d9d9]">${t}</td>`;
const k = (cls, t) => `<td class="${info}${kl}border-black ${cls}">${t}</td>`;
const l = (cls, t) => `<td class="${info}border-b border-black ${cls}">${t}</td>`;
const exam = '2015-2016  Eğitim öğretim Yılı Ders ve Etkinliklere Kalıtımı Değerlendirme Ölçeği ';
const right = {
  2: `<td colspan="2" class="${info}bg-[#ffcc00] text-center">Her Sayfada Yer alması gereken Bilgilier</td>`,
  3: `<td colspan="2" class="${info}bg-[#993300] text-center">Okul Bilgileri</td>`,
  4: k('bg-[#993300] border-t', 'Sınıfı') + l('bg-[#ffcc00]', '5/A'),
  5: k('bg-[#ffcc99]', 'Okul Adı') + l('bg-[#ffcc99]', 'Gaziköy Ortaokulu'),
  6: k('bg-[#993300]', 'Ders') + l('bg-[#ffff99] text-center', 'Sosyal Bilgiler Dersi'),
  7: k('bg-[#ffcc00]', 'Yıl') + l('bg-[#ffff99] text-center', '2015-2016'),
  8: k('bg-[#808000]', '') + l('bg-[#993300] text-center', 'Öğretmen Adı'),
  9: k('bg-[#993300]', 'Ad Soyad') + l('bg-[#ffcc99] text-center', 'Mahmut KIZILOT'),
  10: k('bg-[#993300]', 'Branşı') + l('bg-[#ffcc99] text-center', 'Sosyal Bilgiler Öğretmeni'),
  11: '<td colspan="2" class="bg-[#808000]"></td>',
  12: '<td class="bg-[#808000]"></td><td class="bg-[#808000] border-b border-black"></td>',
  13: k('bg-[#808000]', '') + l('bg-[#993300] text-center', 'Okul Müdürü'),
  14: k('bg-[#993300]', 'Ad Soyad') + l('bg-[#ffcc99] text-center', 'Okul Müdürü Adı'),
  15: k('bg-[#993300]', '') + l('bg-[#ffcc99] text-center', 'Okul Müdürü'),
  16: plain + plain,
  17: `<td class="border-r border-b border-b-[#d9d9d9] border-r-black"></td><td class="${info}bg-[#ffff00]">Ölçek İsimlerini Buraya Yazmanız Yeterli</td>`,
  18: scale('2015-2016 Proje 1'),
  19: scale('2015-2016 Proje 2'),
  20: scale(exam + 1), 21: scale(exam + 2), 22: scale(exam + 3), 23: scale(exam + 4), 24: scale(exam + 5),
  25: plain + '<td class="relative p-0"><div class="absolute -top-px -left-px right-0 bottom-0 border-2 border-[#217346]"></div><div class="absolute -right-px bottom-0 w-[4px] h-[4px] bg-[#217346] border-t border-l border-white"></div></td>'
};

let rows = '<tr class="h-[34px]"><th class="p-0 h-[34px] leading-[13px] font-normal align-bottom bg-[#e6e6e6] border-b border-r border-[#c8c8c8]">1</th>'
  + '<td class="p-0 pl-[2px] font-bold align-bottom bg-[#ffff00] border-b border-r border-black">Öğrenci No</td>'
  + '<td class="p-0 pl-[2px] leading-[13px] font-bold align-bottom bg-[#ffff00] border-b border-r border-black">Adı Soyadı</td>'
  + ['1.Proje', '2.Proje', '1.Ders ve<br>Et.Kat.', '2.Ders ve<br>Et.Kat.', '3.Ders ve<br>Et.Kat.', '4.Ders ve<br>Et.Kat.', '5.Ders ve<br>Et.Kat.']
    .map(t => `<td class="p-0 text-center whitespace-nowrap bg-[#e6e6fa] border-b border-r border-black">${t}</td>`).join('')
  + plain.repeat(5) + '</tr>';

const heights = ['h-[22px]', 'h-[22px]', 'h-[21px]', 'h-[22px]'];
for (let r = 2; r <= 25; r++) {
  const h = heights[(r - 2) % 4];
  const low = r === 16 || r === 25;
  const v = low ? 'align-bottom leading-[13px]' : 'align-middle';
  const rowHead = r === 25 ? 'bg-[#d2d2d2] text-[#217346] border-r-2 border-r-[#217346]' : 'bg-[#e6e6e6] border-r border-r-[#c8c8c8]';
  const edge = (r >= 4 && r <= 7) || r === 9 || r === 10 || r === 14 || r === 15 ? 'border-r-black' : 'border-r-[#d9d9d9]';
  rows += `<tr class="${h} ${v}"><th class="p-0 ${h} font-normal border-b border-b-[#c8c8c8] ${rowHead}">${r}</th>`
    + `<td class="p-0 pr-[2px] text-right bg-[#c4d79b] border-b border-r border-black">${1250 + (r - 2) * 149}</td>`
    + `<td class="p-0 pl-[2px] bg-[#95b3d7] border-b border-r border-black">Öğrenci ${r - 1}</td>`;
  for (let c = 0; c < 7; c++) {
    const bg = c === 1 || c === 3 || c === 5 ? 'bg-[#e6b8b7]' : 'bg-[#fcd5b4]';
    rows += `<td class="p-0 pr-[2px] text-right border-b border-r border-black ${bg}">${c === 6 && r > 2 ? 102 - r : 100}</td>`;
  }
  rows += `<td class="border-r border-b border-b-[#d9d9d9] ${edge}"></td>` + right[r] + plain + '<td class="border-b border-[#d9d9d9]"></td></tr>';
}
document.getElementById('body').innerHTML = rows;
</script>
</body>
</html>
